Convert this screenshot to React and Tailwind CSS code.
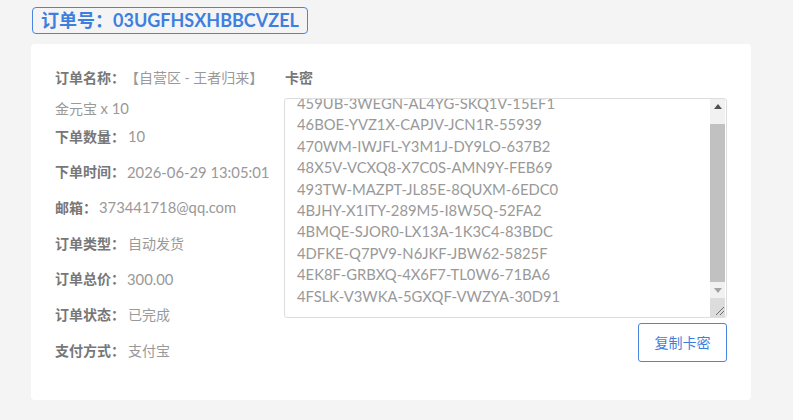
import { useEffect, useRef } from "react";

const cards = [
  "459UB-3WEGN-AL4YG-SKQ1V-15EF1",
  "46BOE-YVZ1X-CAPJV-JCN1R-55939",
  "470WM-IWJFL-Y3M1J-DY9LO-637B2",
  "48X5V-VCXQ8-X7C0S-AMN9Y-FEB69",
  "493TW-MAZPT-JL85E-8QUXM-6EDC0",
  "4BJHY-X1ITY-289M5-I8W5Q-52FA2",
  "4BMQE-SJOR0-LX13A-1K3C4-83BDC",
  "4DFKE-Q7PV9-N6JKF-JBW62-5825F",
  "4EK8F-GRBXQ-4X6F7-TL0W6-71BA6",
  "4FSLK-V3WKA-5GXQF-VWZYA-30D91",
];

// latin : valeurs en chiffres/lettres, un peu plus grandes que le chinois
const rows = [
  ["下单时间：", "2026-06-29 13:05:01", true],
  ["邮箱：", "373441718@qq.com", true],
  ["订单类型：", "自动发货", false],
  ["订单总价：", "300.00", true],
  ["订单状态：", "已完成", false],
  ["支付方式：", "支付宝", false],
];

function Label({ children }) {
  return <span className="font-bold text-[#777]">{children}</span>;
}

export default function App() {
  const boxRef = useRef(null);

  // le textarea est affiché défilé jusqu'en bas
  useEffect(() => {
    if (boxRef.current) boxRef.current.scrollTop = boxRef.current.scrollHeight;
  }, []);

  return (
    <div className="min-h-screen w-full bg-[#f4f4f4] pt-[7px] pl-[31px] pr-[42px] pb-5 font-['Lato','Noto_Sans_CJK_SC',sans-serif] [text-spacing-trim:space-all]">
      {/* Titre */}
      <div className="ml-px inline-block rounded-[4px] border border-[#4a86e0] px-2 text-[18px] font-bold leading-[25px] text-[#3d7fe0]">
        订单号：03UGFHSXHBBCVZEL
      </div>

      {/* Carte */}
      <div className="mt-[10px] flex h-[356px] rounded-[4px] bg-white px-6 pt-[18px]">
        {/* Infos commande */}
        <div className="w-[229px] shrink-0 text-[14px] text-[#999]">
          <div className="h-[60px] leading-[31px]">
            <Label>订单名称：</Label>【自营区 - 王者归来】
            <br />
            金元宝 <span className="text-[14.8px]">x 10</span>
          </div>
          <div className="flex h-[28px] items-center">
            <Label>下单数量：</Label>
            <span className="ml-[3px] text-[14.8px]">10</span>
          </div>
          {rows.map(([label, value, latin]) => (
            <div key={label} className="mt-[7.7px] flex h-[28px] items-center">
              <Label>{label}</Label>
              <span className={latin ? "ml-[2px] text-[14.8px]" : "ml-[3px]"}>{value}</span>
            </div>
          ))}
        </div>

        {/* Cartes */}
        <div className="flex flex-1 flex-col">
          <div className="pl-px text-[14px] font-bold leading-[31px] text-[#777]">卡密</div>
          <div className="relative mt-[5px] h-[220px]">
            <textarea
              ref={boxRef}
              readOnly
              value={cards.join("\n")}
              className="block h-full w-full resize-y rounded-[3px] border border-[#ddd] py-[10px] pl-3 pr-5 text-[14.8px] leading-[21.4px] text-[#999] outline-none font-['Lato',sans-serif]"
            />
            {/* barre de défilement dessinée */}
            <div className="pointer-events-none absolute right-[2px] top-px bottom-px flex w-[15px] flex-col bg-[#f1f1f1]">
              <div className="flex h-[15px] items-center justify-center">
                <svg width="8" height="5" viewBox="0 0 8 5"><path d="M0 5 L4 0 L8 5 Z" fill="#505050" /></svg>
              </div>
              <div className="flex-1 pt-[10px]">
                <div className="h-[158px] bg-[#c1c1c1]" />
              </div>
              <div className="flex h-[15px] items-center justify-center">
                <svg width="8" height="5" viewBox="0 0 8 5"><path d="M0 0 L4 5 L8 0 Z" fill="#a3a3a3" /></svg>
              </div>
              <div className="relative h-[19px] bg-[#dcdcdc]">
                <svg className="absolute bottom-[2px] right-[1px]" width="9" height="9" viewBox="0 0 9 9">
                  <path d="M9 1 L1 9 M9 5 L5 9" stroke="#6e6e6e" strokeWidth="1" />
                </svg>
              </div>
            </div>
          </div>
          <div className="mt-[5px] flex justify-end">
            <button className="h-[39px] w-[89px] rounded-[3px] border border-[#4a86e0] text-[14px] text-[#3d7fe0]">
              复制卡密
            </button>
          </div>
        </div>
      </div>
    </div>
  );
}
